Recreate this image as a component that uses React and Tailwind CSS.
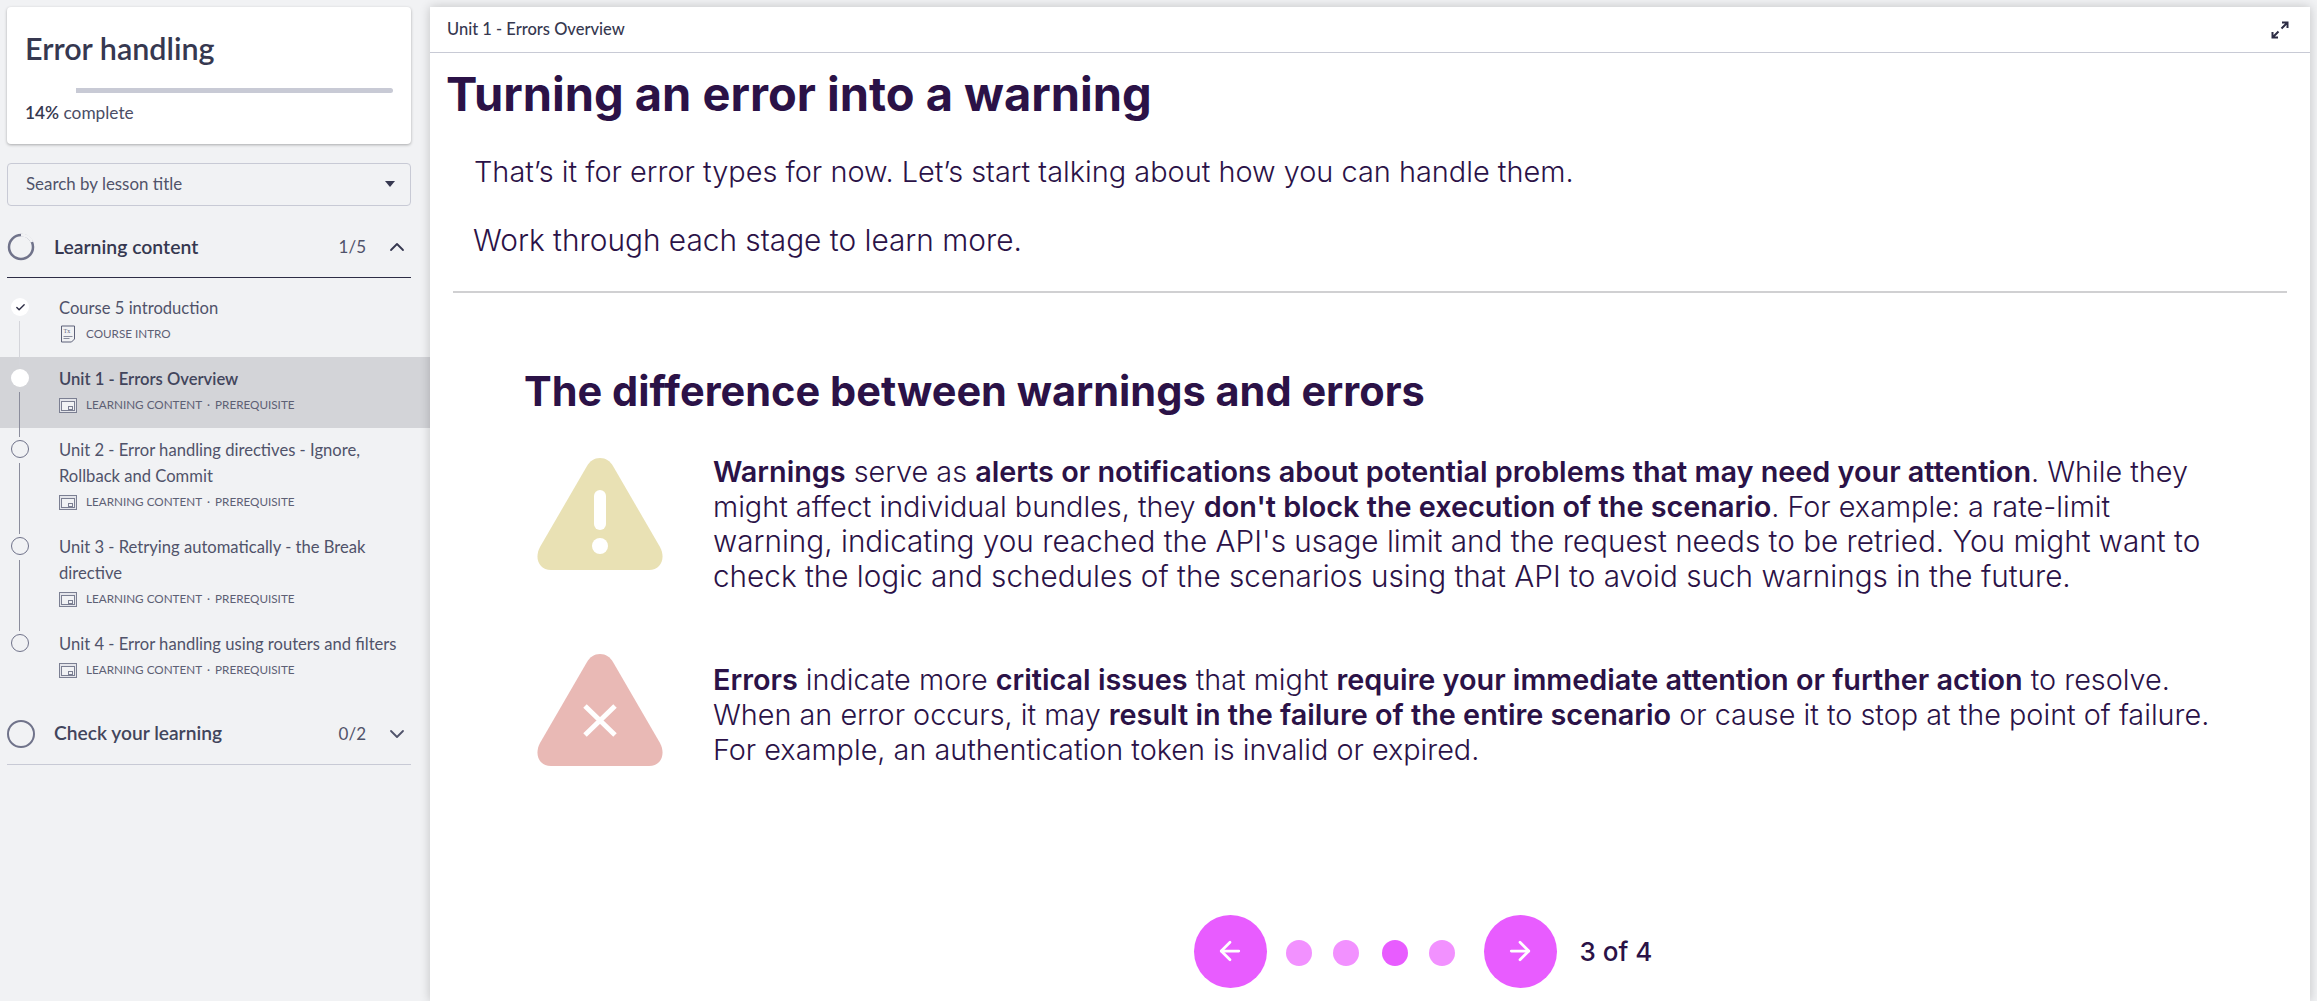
import { ArrowLeft, ArrowRight, ChevronUp, ChevronDown, Check } from 'lucide-react';

const LESSONS = [
  { title: 'Course 5 introduction', meta: 'COURSE INTRO', state: 'done', kind: 'text' },
  { title: 'Unit 1 - Errors Overview', meta: 'LEARNING CONTENT', prereq: true, state: 'current' },
  { title: 'Unit 2 - Error handling directives - Ignore, Rollback and Commit', meta: 'LEARNING CONTENT', prereq: true },
  { title: 'Unit 3 - Retrying automatically - the Break directive', meta: 'LEARNING CONTENT', prereq: true },
  { title: 'Unit 4 - Error handling using routers and filters', meta: 'LEARNING CONTENT', prereq: true, last: true },
];

function SlideIcon() {
  return (
    <svg width="18" height="15" viewBox="0 0 18 15" fill="none" stroke="#7b7f92" strokeWidth="1" className="shrink-0">
      <rect x="0.5" y="0.5" width="17" height="14" fill="#e4e5ea" />
      <rect x="2.5" y="3.5" width="13" height="9" fill="#f1f2f4" />
      <rect x="9.5" y="8.5" width="4" height="3" />
    </svg>
  );
}

function TextIcon() {
  return (
    <svg width="16" height="18" viewBox="0 0 16 18" fill="none" stroke="#5d6178" strokeWidth="1" className="ml-[1px] mr-[1px] shrink-0">
      <path d="M1.5 1h13v13l-3 3h-10z" />
      <path d="M3.5 11.5h9M3.5 13.5h6" strokeWidth="0.7" />
      <text x="3.5" y="8" fontSize="6" fill="#5d6178" stroke="none" fontFamily="Liberation Serif">Tx</text>
    </svg>
  );
}

function Lesson({ lesson }) {
  const current = lesson.state === 'current';
  const done = lesson.state === 'done';
  return (
    <div className={`flex pr-[20px] ${current ? 'bg-[#d3d4d8]' : ''}`}>
      <div className="relative w-[59px] shrink-0">
        {!lesson.last && (
          <div className={`absolute left-[19px] top-[35px] bottom-[-9px] w-px ${done ? 'bg-[#d4d5da]' : 'bg-[#8b8d9c]'}`} />
        )}
        <div
          className={`absolute left-[11px] top-[12px] flex h-[18px] w-[18px] items-center justify-center rounded-full ${
            done || current ? 'bg-white' : 'border border-[#70738a] bg-[#f1f2f4]'
          }`}
        >
          {done && <Check size={11} strokeWidth={3} className="text-[#2d2d45]" />}
        </div>
      </div>
      <div className="pb-[13px] pt-[9px] text-[#50536a]">
        <div className={`text-[16.6px] leading-[26px] ${current ? 'font-semibold text-[#42455c]' : ''}`}>{lesson.title}</div>
        <div className="mt-[3px] flex h-[20px] items-center gap-[9px] text-[11.7px] text-[#5d6074]">
          {lesson.kind === 'text' ? <TextIcon /> : <SlideIcon />}
          <span>
            {lesson.meta}
            {lesson.prereq && <span className="mx-[5px]">·</span>}
            {lesson.prereq && 'PREREQUISITE'}
          </span>
        </div>
      </div>
    </div>
  );
}

function Sidebar() {
  return (
    <aside className="w-[430px] shrink-0 font-['Lato',sans-serif]">
      <div className="ml-[7px] mr-[19px] mt-[7px] h-[137px] rounded-[4px] bg-white px-[18px] pt-[23px] shadow-[0_1px_3px_rgba(0,0,0,0.3)]">
        <h2 className="text-[30.5px] font-semibold leading-[36px] text-[#363850]">Error handling</h2>
        <div className="ml-[51px] mt-[22px] h-[5px] rounded-r-sm bg-[#c8cad5]" />
        <div className="mt-[8px] text-[17.3px] leading-[24px] text-[#4b4e66]">
          <span className="font-semibold text-[#363850]">14%</span> complete
        </div>
      </div>
      <div className="ml-[7px] mr-[19px] mt-[19px] flex h-[43px] items-center justify-between rounded-[4px] border border-[#c8cad5] pb-[2px] pl-[18px] pr-[15px] text-[16.9px] text-[#50536a]">
        <span>Search by lesson title</span>
        <div className="h-0 w-0 border-x-[5px] border-t-[6px] border-x-transparent border-t-[#363850]" />
      </div>
      <div className="ml-[7px] mr-[19px] mt-[16px] flex h-[56px] items-center border-b border-[#2d2d45] pb-[6px]">
        <svg width="28" height="28" viewBox="0 0 28 28" fill="none" className="shrink-0">
          <circle cx="14" cy="14" r="12" stroke="#70738a" strokeWidth="2.5" />
          <path d="M14 2a12 12 0 0 1 11 7" stroke="#f1f2f4" strokeWidth="3" />
        </svg>
        <span className="ml-[19px] flex-1 text-[19.4px] font-semibold text-[#363850]">Learning content</span>
        <span className="text-[17px] text-[#50536a]">1/5</span>
        <ChevronUp size={24} strokeWidth={1.8} className="ml-[19px] mr-[2px] text-[#363850]" />
      </div>
      <div className="mt-[8px]">
        {LESSONS.map((lesson) => (
          <Lesson key={lesson.title} lesson={lesson} />
        ))}
      </div>
      <div className="ml-[7px] mr-[19px] mt-[16px] flex h-[56px] items-center border-b border-[#c8cad5] pb-[6px]">
        <div className="h-[28px] w-[28px] shrink-0 rounded-full border-[2.5px] border-[#70738a]" />
        <span className="ml-[19px] flex-1 text-[19.2px] font-semibold text-[#42455c]">Check your learning</span>
        <span className="text-[17px] text-[#50536a]">0/2</span>
        <ChevronDown size={24} strokeWidth={1.8} className="ml-[19px] mr-[2px] text-[#50536a]" />
      </div>
    </aside>
  );
}

function WarningIcon() {
  return (
    <svg width="128" height="112" viewBox="0 0 128 112" className="shrink-0">
      <path d="M64 0c6 0 10 3 13 8l47 81c6 11 1 23-11 23H15C3 112-2 100 4 89L51 8c3-5 7-8 13-8z" fill="#e9e1b4" />
      <rect x="58" y="32" width="12" height="40" rx="6" fill="#fff" />
      <circle cx="64" cy="88" r="8" fill="#fff" />
    </svg>
  );
}

function ErrorIcon() {
  return (
    <svg width="128" height="112" viewBox="0 0 128 112" className="shrink-0">
      <path d="M64 0c6 0 10 3 13 8l47 81c6 11 1 23-11 23H15C3 112-2 100 4 89L51 8c3-5 7-8 13-8z" fill="#e9b9b5" />
      <path d="M49 52l30 29M79 52L49 81" stroke="#fff" strokeWidth="5" />
    </svg>
  );
}

function Pager() {
  return (
    <div className="mt-auto flex h-[100px] items-center justify-center pl-[106px]">
      <button className="flex h-[73px] w-[73px] items-center justify-center rounded-full bg-[#e85cff] text-white">
        <ArrowLeft size={30} strokeWidth={2.2} />
      </button>
      <div className="ml-[19px] mr-[29px] flex translate-y-[2px] gap-[21px]">
        <div className="h-[26px] w-[26px] rounded-full bg-[#f291ff]" />
        <div className="h-[26px] w-[26px] rounded-full bg-[#f291ff]" />
        <div className="ml-[2px] h-[26px] w-[26px] rounded-full bg-[#e85cff]" />
        <div className="h-[26px] w-[26px] rounded-full bg-[#f291ff]" />
      </div>
      <button className="flex h-[73px] w-[73px] items-center justify-center rounded-full bg-[#e85cff] text-white">
        <ArrowRight size={30} strokeWidth={2.2} />
      </button>
      <span className="ml-[23px] text-[26px] font-medium text-[#2b1247]">3 of 4</span>
    </div>
  );
}

export default function App() {
  return (
    <div className="flex h-[1001px] overflow-hidden bg-[#f1f2f4]">
      <Sidebar />
      <main className="mr-[7px] mt-[7px] flex flex-1 flex-col bg-white font-['Inter',sans-serif] text-[#2b1247] shadow-[0_0_10px_rgba(0,0,0,0.2)]">
        <div className="flex h-[46px] shrink-0 items-center justify-between border-b border-[#c8cad5] pl-[17px] pr-[21px] font-['Lato',sans-serif] text-[16.5px] font-medium text-[#363850]">
          <span>Unit 1 - Errors Overview</span>
          <svg width="18" height="18" viewBox="0 0 18 18" fill="none" stroke="#2d2d45" strokeWidth="2">
            <path d="M10.5 7.5L16 2M11 1.5h5.5V7M7.5 10.5L2 16M7 16.5H1.5V11" />
          </svg>
        </div>
        <h1 className="ml-[16px] mt-[10px] text-[47px] font-bold leading-[62px]">Turning an error into a warning</h1>
        <div className="mx-[23px] mt-[24px] border-b-2 border-[#d0d0d2] pb-[28px] pl-[21px] font-light">
          <p className="text-[28.9px] leading-[46px]">That’s it for error types for now. Let’s start talking about how you can handle them.</p>
          <p className="-ml-[1px] mt-[22px] text-[29.8px] leading-[46px]">Work through each stage to learn more.</p>
        </div>
        <section className="pl-[94px] pr-[78px]">
          <h2 className="mt-[70px] text-[41.5px] font-bold leading-[56px]">The difference between warnings and errors</h2>
          <div className="mt-[35px] flex gap-[49px]">
            <div className="pl-[12px] pt-[4px]"><WarningIcon /></div>
            <p className="text-[28.8px] font-light leading-[35px]">
              <strong className="font-semibold">Warnings</strong> serve as <strong className="font-semibold">alerts or notifications about potential problems that may need your attention</strong>. While they might affect individual bundles, they <strong className="font-semibold">don't block the execution of the scenario</strong>. For example: a rate-limit <span className="text-[29.7px]">warning, indicating you reached the API's usage limit and the request needs to be retried. You might want to check the logic and schedules of the scenarios using that API to avoid such warnings in the future.</span>
            </p>
          </div>
          <div className="mt-[68px] flex gap-[49px]">
            <div className="-mt-[8px] pl-[12px]"><ErrorIcon /></div>
            <p className="text-[28.8px] font-light leading-[35px]">
              <strong className="font-semibold">Errors</strong> indicate more <strong className="font-semibold">critical issues</strong> that might <strong className="font-semibold">require your immediate attention or further action</strong> to resolve. When an error occurs, it may <strong className="font-semibold">result in the failure of the entire scenario</strong> or cause it to stop at the point of failure. For example, an authentication token is invalid or expired.
            </p>
          </div>
        </section>
        <Pager />
      </main>
    </div>
  );
}
